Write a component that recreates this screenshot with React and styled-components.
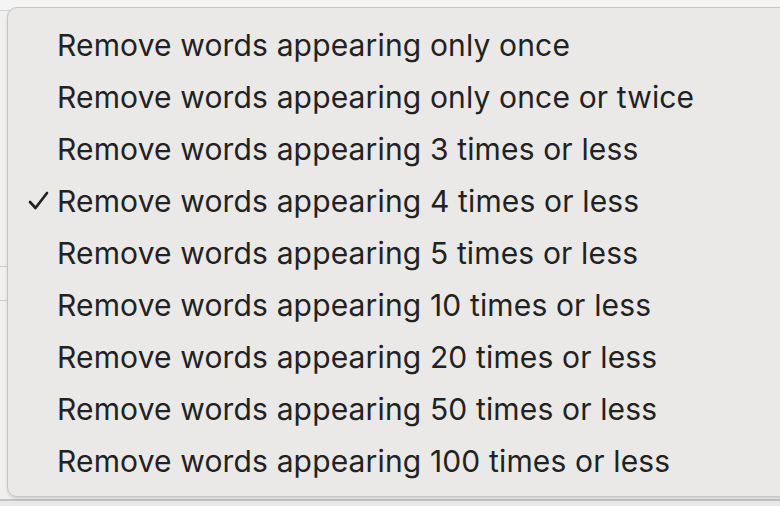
import styled, { createGlobalStyle } from "styled-components";

const GlobalStyle = createGlobalStyle`
    html, body {
        margin: 0;
        padding: 0;
        width: 780px;
        height: 506px;
        overflow: hidden;
        background: #efefef;
    }
`;

const Window = styled.div`
    position: relative;
    width: 780px;
    height: 506px;
    overflow: hidden;
    display: flex;
    flex-direction: column;
    background: #f0f0f0;
`;

const TitleBar = styled.div`
    height: 10px;
    border-bottom: 1px solid #cfcfcf;
    background: #f4f4f4;
`;

const Spacer = styled.div`
    flex: ${p => p.$grow ? 1 : "none"};
    height: ${p => p.$h ? p.$h + "px" : "auto"};
`;

const ListRow = styled.div`
    height: 33px;
    border-top: 1px solid #cdcdcd;
    border-bottom: 1px solid #cdcdcd;
`;

const StatusBar = styled.div`
    height: 5px;
    border-top: 2px solid #c4c4c4;
    background: #e9e9e9;
`;

const Menu = styled.div`
    position: absolute;
    left: 7px;
    top: 7px;
    right: -30px;
    height: 490px;
    box-sizing: border-box;
    padding: 11px 0 9px 20px;
    background: #eae9e7;
    border: 1px solid #c6c6c6;
    border-radius: 10px;
    box-shadow: 0 2px 3px rgba(0, 0, 0, 0.12);
    font-family: Inter, "Liberation Sans", sans-serif;
    color: #222222;
`;

const Item = styled.div`
    display: flex;
    align-items: center;
    height: 52px;
    font-size: 30px;
    letter-spacing: 0.15px;
    white-space: nowrap;
`;

const CheckSlot = styled.span`
    width: 29px;
    flex: none;
    display: flex;
    align-items: center;
`;

const Check = () => (
    <svg width="21" height="20" viewBox="0 0 21 20">
        <path d="M2 11 L7.5 17 L19 2" fill="none" stroke="#222222" strokeWidth="2.7" strokeLinecap="round" strokeLinejoin="round" />
    </svg>
);

const options = [
    "Remove words appearing only once",
    "Remove words appearing only once or twice",
    "Remove words appearing 3 times or less",
    "Remove words appearing 4 times or less",
    "Remove words appearing 5 times or less",
    "Remove words appearing 10 times or less",
    "Remove words appearing 20 times or less",
    "Remove words appearing 50 times or less",
    "Remove words appearing 100 times or less",
];

export default function App() {
    return (
        <>
            <GlobalStyle />
            <Window>
                <TitleBar />
                <Spacer $h={255} />
                <ListRow />
                <Spacer $grow />
                <StatusBar />
                <Menu>
                    {options.map((label, i) => (
                        <Item key={label}>
                            <CheckSlot>{i === 3 && <Check />}</CheckSlot>
                            {label}
                        </Item>
                    ))}
                </Menu>
            </Window>
        </>
    );
}
